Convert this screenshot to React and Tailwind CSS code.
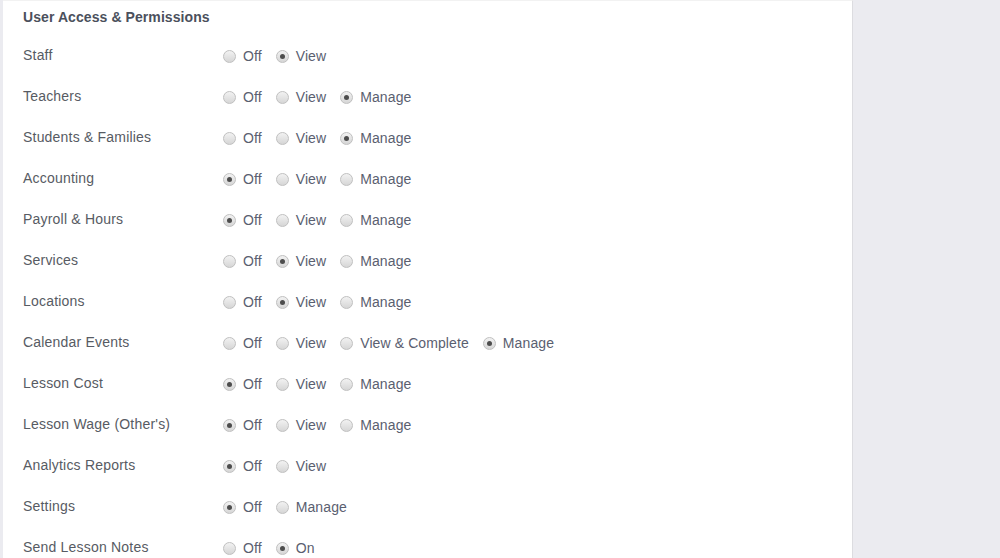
const rows = [
  ['Staff', ['Off', 'View'], 1],
  ['Teachers', ['Off', 'View', 'Manage'], 2],
  ['Students & Families', ['Off', 'View', 'Manage'], 2],
  ['Accounting', ['Off', 'View', 'Manage'], 0],
  ['Payroll & Hours', ['Off', 'View', 'Manage'], 0],
  ['Services', ['Off', 'View', 'Manage'], 1],
  ['Locations', ['Off', 'View', 'Manage'], 1],
  ['Calendar Events', ['Off', 'View', 'View & Complete', 'Manage'], 3],
  ['Lesson Cost', ['Off', 'View', 'Manage'], 0],
  ["Lesson Wage (Other's)", ['Off', 'View', 'Manage'], 0],
  ['Analytics Reports', ['Off', 'View'], 0],
  ['Settings', ['Off', 'Manage'], 0],
  ['Send Lesson Notes', ['Off', 'On'], 1],
]

function Radio({ checked }) {
  return (
    <span className="w-[13px] h-[13px] rounded-full border border-[#c0c0c0] bg-gradient-to-b from-[#f2f2f2] to-[#d6d6d6] flex items-center justify-center shrink-0">
      {checked && <span className="w-[5px] h-[5px] rounded-full bg-[#4d4d4d]" />}
    </span>
  )
}

export default function App() {
  return (
    <div className="w-[1000px] h-[558px] overflow-hidden bg-[#ebebf0] flex font-['Liberation_Sans',Arial,sans-serif]">
      <div className="ml-[3px] w-[850px] h-full bg-white border-t border-[#f2f2f2] border-r border-r-[#dcdce0] pl-[20px] pt-[8px]">
        <div className="text-[14px] font-bold text-[#4b505c] leading-[17px] tracking-[0.08px]">User Access &amp; Permissions</div>
        <div className="mt-[21px]">
          {rows.map(([label, opts, sel]) => (
            <div key={label} className="flex items-start h-[41px] text-[14px] leading-[17px]">
              <div className="w-[200px] text-[#575b63] tracking-[0.2px]">{label}</div>
              <div className="flex items-center gap-[14px] text-[#5a6070] mt-[1px] tracking-[0.1px]">
                {opts.map((o, i) => (
                  <label key={o} className="flex items-center gap-[7px]">
                    <Radio checked={i === sel} />
                    <span>{o}</span>
                  </label>
                ))}
              </div>
            </div>
          ))}
        </div>
      </div>
    </div>
  )
}
